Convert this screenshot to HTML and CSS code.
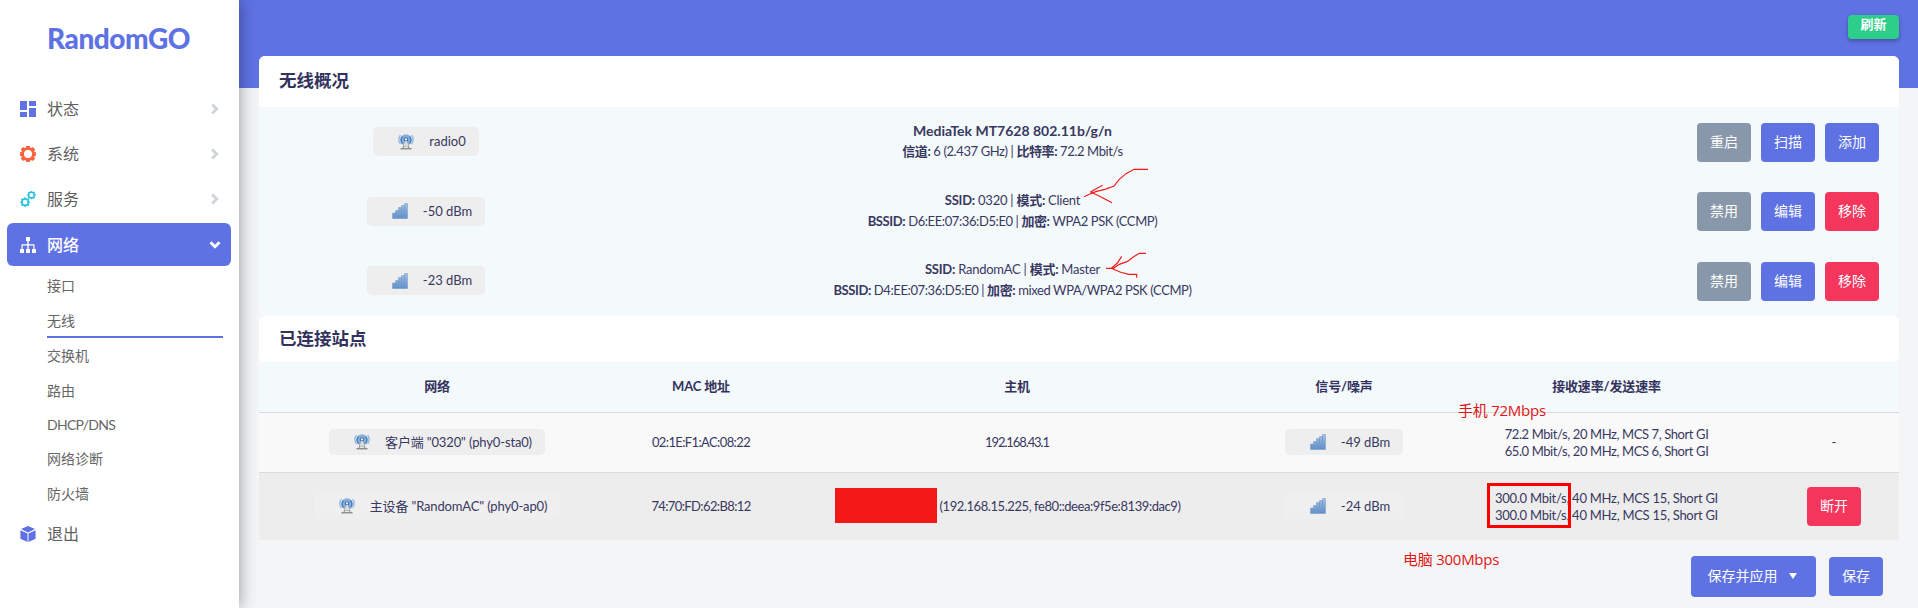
FILE: index.html
```html
<!DOCTYPE html>
<html lang="zh-CN">
<head>
<meta charset="utf-8">
<title>无线概况</title>
<link rel="stylesheet" href="styles.css">
</head>
<body>
<svg class="defs" width="0" height="0" aria-hidden="true">
  <defs>
    <linearGradient id="bar" x1="0" x2="0" y1="0" y2="1"><stop offset="0" stop-color="#a3c1e2"/><stop offset="1" stop-color="#5e8fc9"/></linearGradient>
    <path id="cog" fill-rule="evenodd" d="M6.300 0h3.400l.5 1.700 1 .4 1.700-1 2.300 2.300-1 1.700.4 1 1.400.3v3.400l-1.400.3-.4 1 1 1.700-2.300 2.300-1.700-1-1 .4-.5 1.500H6.300l-.5-1.500-1-.4-1.700 1L.8 12.800l1-1.700-.4-1L0 9.700V6.300L1.400 6l.4-1-1-1.700L3.100 1l1.700 1 1-.4zM8 4a4 4 0 1 0 0 8 4 4 0 0 0 0-8z"/>
    <symbol id="radio" viewBox="0 0 16 16">
      <path d="M2.500 1C.3 3.500.3 7.500 2.500 10M13.500 1c2.200 2.500 2.200 6.500 0 9" fill="none" stroke="#9dbbe0" stroke-width="1.500"/>
      <circle cx="8" cy="6" r="5.800" fill="#86aede"/>
      <path d="M4.500 2.500a5 5 0 0 0 0 7M11.500 2.500a5 5 0 0 1 0 7" fill="none" stroke="#3f74b8" stroke-width="1.100"/>
      <circle cx="8" cy="5.500" r="2.300" fill="#4678b4"/>
      <circle cx="8" cy="5.300" r="1.100" fill="#eef3f8"/>
      <path d="M7.500 6.500L5 14M8.500 6.500L11 14M6.500 9.500h3M5.500 12h5" stroke="#8b9192" fill="none"/>
      <path d="M7.300 7h1.400l2 5H5.300z" fill="#d9dcd9"/>
      <path d="M2.500 14.700h11" stroke="#8b8f88" stroke-width="1.500"/>
    </symbol>
    <symbol id="signal" viewBox="0 0 16 16">
      <path fill="url(#bar)" stroke="#7199c8" stroke-width=".5" d="M.5 10h3v5.500h-3zM3.500 7.500h3v8h-3zM6.500 4.500h3v11h-3zM9.500 2.500h3v13h-3zM12.500.5h3v15h-3z"/>
    </symbol>
    <symbol id="chev" viewBox="0 0 8 12"><path d="M1.200 1.500L5.700 6l-4.500 4.500" fill="none" stroke="currentColor" stroke-width="2.900"/></symbol>
  </defs>
</svg>
<div class="app">
  <aside class="side">
    <div class="logo">RandomGO</div>
    <nav class="menu">
      <a class="item"><svg class="ico" viewBox="0 0 16 16" fill="#5e72e4"><path d="M0 0h7v9H0zM9 0h7v5H9zM0 11h7v5H0zM9 7h7v9H9z"/></svg><span>状态</span><svg class="chev"><use href="#chev"/></svg></a>
      <a class="item"><svg class="ico" viewBox="0 0 16 16" fill="#fb6340"><use href="#cog"/></svg><span>系统</span><svg class="chev"><use href="#chev"/></svg></a>
      <a class="item"><svg class="ico" viewBox="0 0 16 16" fill="#2dbfe0"><use href="#cog" transform="translate(.5 6.500) scale(.58)"/><use href="#cog" transform="translate(7.300 0) scale(.52)"/></svg><span>服务</span><svg class="chev"><use href="#chev"/></svg></a>
      <a class="item active"><svg class="ico" viewBox="0 0 16 16" fill="#fff"><path d="M6 0h4v4H8.700v3.200h5.800V12H16v4h-4v-4h1.300V8.500H8.700V12H10v4H6v-4h1.300V8.500H2.700V12H4v4H0v-4h1.500V7.200h5.800V4H6z"/></svg><span>网络</span><svg class="chev"><use href="#chev"/></svg></a>
      <ul class="sub">
        <li>接口</li><li class="current">无线</li><li>交换机</li><li>路由</li><li class="latin">DHCP/DNS</li><li>网络诊断</li><li>防火墙</li>
      </ul>
      <a class="item exit"><svg class="ico" viewBox="0 0 16 16" fill="#5e72e4"><path d="M8 0l7 3-7 3.500L1 3zM.4 4.200l7.100 3.400V16L.4 12.700zM15.600 4.200L8.500 7.600V16l7.100-3.300z"/></svg><span>退出</span></a>
    </nav>
  </aside>
  <main class="main">
    <header class="top"><button class="refresh">刷新</button></header>
    <div class="content">
      <section class="card">
        <h3 class="title">无线概况</h3>
        <div class="overview">
          <div class="radio-row">
            <div class="cell"><span class="badge"><svg class="bi"><use href="#radio"/></svg>radio0</span></div>
            <div class="info"><b class="device">MediaTek MT7628 802.11b/g/n</b><p><b>信道:</b> 6 (2.437 GHz) | <b>比特率:</b> 72.2 Mbit/s</p></div>
            <div class="acts"><button class="btn gray">重启</button><button class="btn">扫描</button><button class="btn">添加</button></div>
          </div>
          <div class="radio-row short">
            <div class="cell"><span class="badge"><svg class="bi"><use href="#signal"/></svg>-50 dBm</span></div>
            <div class="info"><p class="wide"><b>SSID:</b> 0320 | <b>模式:</b> Client</p><p><b>BSSID:</b> D6:EE:07:36:D5:E0 | <b>加密:</b> WPA2 PSK (CCMP)</p></div>
            <div class="acts"><button class="btn gray">禁用</button><button class="btn">编辑</button><button class="btn red">移除</button></div>
          </div>
          <div class="radio-row">
            <div class="cell"><span class="badge"><svg class="bi"><use href="#signal"/></svg>-23 dBm</span></div>
            <div class="info"><p class="wide"><b>SSID:</b> RandomAC | <b>模式:</b> Master</p><p><b>BSSID:</b> D4:EE:07:36:D5:E0 | <b>加密:</b> mixed WPA/WPA2 PSK (CCMP)</p></div>
            <div class="acts"><button class="btn gray">禁用</button><button class="btn">编辑</button><button class="btn red">移除</button></div>
          </div>
        </div>
      </section>
      <section class="card second">
        <h3 class="title">已连接站点</h3>
        <table class="stations">
          <colgroup><col class="c1"><col class="c2"><col class="c3"><col class="c4"><col class="c5"><col class="c6"></colgroup>
          <thead><tr><th>网络</th><th>MAC 地址</th><th>主机</th><th>信号/噪声</th><th>接收速率/发送速率</th><th></th></tr></thead>
          <tbody>
            <tr>
              <td><span class="badge net"><svg class="bi"><use href="#radio"/></svg>客户端 "0320" (phy0-sta0)</span></td>
              <td class="mac">02:1E:F1:AC:08:22</td>
              <td class="ip">192.168.43.1</td>
              <td><span class="badge sig"><svg class="bi"><use href="#signal"/></svg>-49 dBm</span></td>
              <td class="rate first">72.2 Mbit/s, 20 MHz, MCS 7, Short GI<br>65.0 Mbit/s, 20 MHz, MCS 6, Short GI</td>
              <td class="last">-</td>
            </tr>
            <tr class="even">
              <td><span class="badge net"><svg class="bi"><use href="#radio"/></svg>主设备 "RandomAC" (phy0-ap0)</span></td>
              <td class="mac">74:70:FD:62:B8:12</td>
              <td><div class="host"><i class="redact"></i><span>(192.168.15.225, fe80::deea:9f5e:8139:dac9)</span></div></td>
              <td><span class="badge sig"><svg class="bi"><use href="#signal"/></svg>-24 dBm</span></td>
              <td class="rate">300.0 Mbit/s, 40 MHz, MCS 15, Short GI<br>300.0 Mbit/s, 40 MHz, MCS 15, Short GI</td>
              <td class="last"><button class="btn red">断开</button></td>
            </tr>
          </tbody>
        </table>
      </section>
      <footer class="actions"><button class="btn apply">保存并应用<span class="caret"></span></button><button class="btn">保存</button></footer>
    </div>
  </main>
</div>
<svg class="arrows" viewBox="0 0 1260 660" fill="none" stroke="#f21a1a" stroke-width="3.500">
  <path d="M1044 208h-42l-24 13-20 17-16 20-27 10-28 7-17 7-18 8M908 256l-25 13-11 7 30 14 34 18M1038 460h-20l-17 10-20 15-23 8-18 12h-22M965 469l-13 20-18 16 26 11 26 7h24v10"/>
</svg>
<div class="mark box"></div>
<div class="mark phone">手机 72Mbps</div>
<div class="mark pc">电脑 300Mbps</div>
</body>
</html>
```
FILE: styles.css
```css
*{box-sizing:border-box}
body{margin:0;background:#f4f5f7;color:#38385f;font:13px/21px Lato,"Noto Sans CJK SC",sans-serif;overflow:hidden}
p,h3,ul{margin:0;padding:0}
b{font-weight:700}
.defs{position:absolute}
.app{display:flex;height:608px}
.side{width:239px;flex:none;background:#fff;box-shadow:0 0 16px rgba(0,0,0,.4);z-index:1}
.logo{height:87px;padding:20px 0 0 47px;font-size:28px;line-height:36px;font-weight:900;letter-spacing:-.45px;color:#5e72e4}
.menu{padding:0 8px 0 7px}
.item{display:flex;align-items:center;height:43px;margin-bottom:2px;padding:0 12px 0 13px;border-radius:6px;font-size:16px;color:#5f5f5f}
.item span{flex:1;padding-bottom:1px}
.ico{width:16px;height:16px;margin-right:11px}
.chev{width:8px;height:12px;color:#ced4da}
.active{background:#5e72e4;color:#fff;margin:3px 0;font-weight:500}
.active .chev{color:#fff;transform:rotate(90deg)}
.sub{list-style:none;padding:1px 8px 0 40px;font-size:14px;color:#666}
.sub li{height:35px;line-height:32px}
.sub .current{border-bottom:2px solid #5e72e4;height:33px;margin-bottom:2px}
.sub .latin{height:33px;letter-spacing:-.7px;line-height:30px}
.exit{margin-top:-1px}
.main{flex:1;min-width:0}
.top{height:88px;background:#5e72e4;display:flex;justify-content:flex-end;align-items:flex-start;padding:15px 19px 0}
button{font-family:inherit;border:0;color:#fff;padding:0}
.refresh{width:51px;height:24px;padding-bottom:5px;line-height:19px;background:#2dce89;border-radius:4px;font-size:13px;font-weight:700;box-shadow:0 2px 4px rgba(0,0,0,.3)}
.content{padding:0 19px 0 20px;margin-top:-32px}
.card{background:#f4f9fc;border-radius:6px}
.title{height:51px;line-height:49px;padding-left:20px;background:#fff;border-radius:6px 6px 0 0;font-size:17.5px;font-weight:700;color:#32325d}
.second .title{height:46px;line-height:46px;border-radius:6px}
.radio-row{display:grid;grid-template-columns:334px 839px 1fr;height:70px;align-items:center}
.short{height:69px}
.cell,.info{text-align:center}
.info{letter-spacing:-.4px;padding-bottom:2px}
.wide{letter-spacing:-.25px}
.device{display:block;font-size:14px;letter-spacing:0}
.acts{display:flex;justify-content:flex-end;gap:10px;padding-right:20px}
.btn{width:54px;height:39px;border-radius:4px;background:#5e72e4;font-size:14px;padding-bottom:3px}
.gray{background:#8898aa}
.red{background:#f5365c}
.badge{display:inline-flex;align-items:center;height:28px;padding:0 13px 0 25px;border-radius:5px;background:#eee;vertical-align:middle}
.bi{width:16px;height:16px;margin-right:15px}
.radio-row .badge{height:29px;margin-bottom:1px}
.stations{width:1640px;table-layout:fixed;border-collapse:collapse;text-align:center}
.c1{width:356px}.c2{width:172px}.c3{width:460px}.c4{width:194px}.c5{width:331px}.c6{width:127px}
th{height:50px;padding:0;font-weight:700;letter-spacing:-.15px;color:#32325d}
td{height:60px;padding:0;border-top:1px solid #d8dadc;background:#f9f9f9;line-height:17px}
.even td{height:68px;background:#ededed}
.stations .badge{height:26px}
.even .badge{background:#efefef}
.net{letter-spacing:-.15px}
.mac{letter-spacing:-.62px}
.ip{letter-spacing:-1.1px}
.rate{letter-spacing:-.27px;padding-top:1px}
.first{letter-spacing:-.4px}
.last{padding-right:3px}
.host{display:flex;justify-content:center;align-items:center;gap:2px;margin-left:-18px;letter-spacing:-.43px}
.redact{width:102px;height:35px;margin-bottom:2px;background:#f21818}
.actions{display:flex;justify-content:flex-end;align-items:center;gap:13px;padding:16px 16px 0 0}
.apply{width:125px;height:41px}
.caret{display:inline-block;margin:0 3px 2px 11px;border:4px solid transparent;border-top:6px solid #fff;border-bottom:0}
.arrows{position:absolute;left:800px;top:100px;width:420px;height:220px;z-index:2}
.mark{position:absolute;z-index:2;color:#e01515;font:15px/20px "Open Sans","Noto Sans CJK SC",sans-serif;letter-spacing:-.25px;white-space:nowrap}
.box{left:1487px;top:483px;width:84px;height:45px;border:3px solid #f00}
.phone{left:1458px;top:400px}
.pc{left:1403px;top:549px}
```
